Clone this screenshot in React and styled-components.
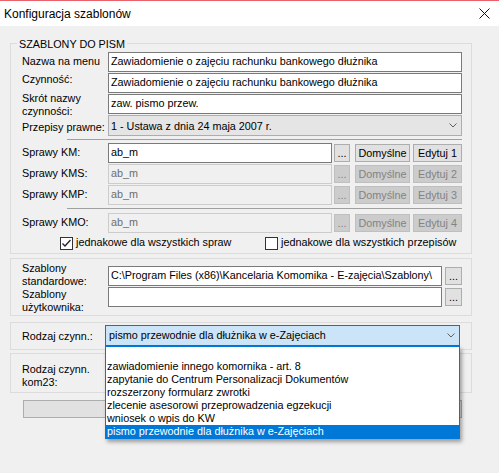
import React from 'react';
import styled, { createGlobalStyle } from 'styled-components';

const FONT = `"Liberation Sans", Arial, sans-serif`;

const GlobalStyle = createGlobalStyle`
  html, body { margin: 0; padding: 0; background: #f0f0f0; }
  body { font-family: ${FONT}; }
  * { box-sizing: border-box; }
`;

const Window = styled.div`
  position: relative;
  width: 499px;
  height: 473px;
  overflow: hidden;
  background: #f0f0f0;
  font-family: ${FONT};
  font-size: 10.8px;
  line-height: 13px;
  color: #000;
`;

const TitleBar = styled.div`
  height: 26px;
  border-top: 1px solid #e8606a;
  background: #fff;
  display: flex;
  align-items: center;
  justify-content: space-between;
  padding: 0 9px 0 4px;
`;

const Title = styled.div`
  font-size: 12px;
  line-height: 14px;
`;

const Client = styled.div`
  display: flex;
  flex-direction: column;
  align-items: flex-start;
  padding: 17px 0 0 10px;
`;

const GroupBox = styled.div`
  position: relative;
  width: 462px;
  height: ${p => p.$h}px;
  margin-top: ${p => p.$mt || 0}px;
  border: 1px solid #dcdcdc;
  padding: ${p => p.$pt || 0}px 9px 0 11px;
  display: flex;
  flex-direction: column;
`;

const Legend = styled.div`
  position: absolute;
  top: -6px;
  left: 6px;
  padding: 0 2px;
  background: #f0f0f0;
`;

const Row = styled.div`
  display: flex;
  align-items: flex-start;
  height: ${p => p.$h || 20}px;
  margin-top: ${p => p.$mt || 0}px;
  flex: none;
`;

const Label = styled.div`
  width: ${p => p.$w || 86}px;
  flex: none;
  margin-top: ${p => p.$pt || 0}px;
  white-space: nowrap;
`;

const TextBox = styled.div`
  width: ${p => p.$w || 354}px;
  height: 20px;
  flex: none;
  border: 1px solid ${p => (p.$disabled ? '#cccccc' : '#7a7a7a')};
  background: ${p => (p.$disabled ? '#f0f0f0' : '#fff')};
  color: ${p => (p.$disabled ? '#6d6d6d' : '#000')};
  padding: 2px 2px 0;
  white-space: nowrap;
  overflow: hidden;
`;

const Combo = styled.div`
  width: ${p => p.$w}px;
  height: 21px;
  flex: none;
  display: flex;
  align-items: flex-start;
  justify-content: space-between;
  border: 1px solid ${p => (p.$focused ? '#0078d7' : '#adadad')};
  background: ${p => (p.$focused ? '#cce4f7' : '#e5e5e5')};
  padding: ${p => (p.$focused ? '3px 0 0 3px' : '4px 0 0 2px')};
  white-space: nowrap;
`;

const ChevronBox = styled.div`
  width: 17px;
  height: 19px;
  margin-top: ${p => (p.$focused ? -3 : -4)}px;
  display: flex;
  align-items: center;
  justify-content: center;
  flex: none;
`;

const Btn = styled.div`
  width: ${p => p.$w}px;
  height: 18px;
  flex: none;
  margin-left: ${p => p.$ml || 0}px;
  margin-top: 1px;
  border: 1px solid ${p => (p.$disabled ? '#bfbfbf' : '#adadad')};
  background: ${p => (p.$disabled ? '#cccccc' : '#e1e1e1')};
  color: ${p => (p.$disabled ? '#838383' : '#000')};
  display: flex;
  align-items: center;
  justify-content: center;
  white-space: nowrap;
`;

const Separator = styled.div`
  width: 395px;
  height: 1px;
  flex: none;
  margin: ${p => p.$mt}px 0 ${p => p.$mb}px 45px;
  background: #a0a0a0;
`;

const CheckRow = styled.div`
  display: flex;
  height: 14px;
  flex: none;
  margin-top: 4px;
  padding-left: 38px;
`;

const CheckOption = styled.div`
  display: flex;
  align-items: flex-start;
  width: ${p => (p.$w ? `${p.$w}px` : 'auto')};
  flex: none;
`;

const CheckBox = styled.div`
  width: 13px;
  height: 13px;
  flex: none;
  border: 1px solid #333;
  background: #fff;
  display: flex;
  align-items: center;
  justify-content: center;
`;

const CheckText = styled.span`
  margin-left: 3px;
  margin-top: -1px;
  white-space: nowrap;
`;

const WideButton = styled.div`
  width: 439px;
  height: 18px;
  margin: 7px 0 0 13px;
  border: 1px solid #adadad;
  background: #e1e1e1;
`;

const DropList = styled.div`
  position: absolute;
  left: 105px;
  top: 346px;
  width: 355px;
  height: 93px;
  border: 1px solid #0078d7;
  background: #fff;
  box-shadow: 2px 3px 4px rgba(0, 0, 0, 0.35);
  display: flex;
  flex-direction: column;
`;

const ListItem = styled.div`
  height: 13px;
  flex: none;
  padding-left: 1px;
  white-space: nowrap;
  background: ${p => (p.$selected ? '#0078d7' : 'transparent')};
  color: ${p => (p.$selected ? '#fff' : '#000')};
`;

const Chevron = () => (
  <svg width="8" height="5" viewBox="0 0 8 5">
    <polyline points="0.5,0.5 4,4 7.5,0.5" fill="none" stroke="#606060" strokeWidth="1" />
  </svg>
);

const CloseIcon = () => (
  <svg width="11" height="11" viewBox="0 0 11 11">
    <path d="M0.5 0.5 L10.5 10.5 M10.5 0.5 L0.5 10.5" stroke="#111" strokeWidth="1" fill="none" />
  </svg>
);

const CheckMark = () => (
  <svg width="11" height="11" viewBox="0 0 11 11">
    <polyline points="1.5,5.5 4,8 9.5,2" fill="none" stroke="#222" strokeWidth="1.3" />
  </svg>
);

const CaseRow = ({ label, disabled, n }) => (
  <Row $mt={n === 1 || n === 4 ? 0 : 1}>
    <Label $pt={3}>{label}</Label>
    <TextBox $w={224} $disabled={disabled}>ab_m</TextBox>
    <Btn $w={16} $ml={2} $disabled={disabled}>...</Btn>
    <Btn $w={55} $ml={5} $disabled={disabled}>Domyślne</Btn>
    <Btn $w={49} $ml={3} $disabled={disabled}>Edytuj {n}</Btn>
  </Row>
);

const items = [
  '',
  'zawiadomienie innego komornika - art. 8',
  'zapytanie do Centrum Personalizacji Dokumentów',
  'rozszerzony formularz zwrotki',
  'zlecenie asesorowi przeprowadzenia egzekucji',
  'wniosek o wpis do KW',
  'pismo przewodnie dla dłużnika w e-Zajęciach',
];

export default function App() {
  return (
    <>
      <GlobalStyle />
      <Window>
        <TitleBar>
          <Title>Konfiguracja szablonów</Title>
          <CloseIcon />
        </TitleBar>
        <Client>
          <GroupBox $h={211} $pt={8}>
            <Legend>SZABLONY DO PISM</Legend>
            <Row>
              <Label $pt={3}>Nazwa na menu</Label>
              <TextBox>Zawiadomienie o zajęciu rachunku bankowego dłużnika</TextBox>
            </Row>
            <Row $mt={1}>
              <Label $pt={0}>Czynność:</Label>
              <TextBox>Zawiadomienie o zajęciu rachunku bankowego dłużnika</TextBox>
            </Row>
            <Row $mt={1}>
              <Label $pt={-2}>
                Skrót nazwy
                <br />
                czynności:
              </Label>
              <TextBox>zaw. pismo przew.</TextBox>
            </Row>
            <Row $mt={1} $h={21}>
              <Label $pt={6}>Przepisy prawne:</Label>
              <Combo $w={354}>
                <span>1 - Ustawa z dnia 24 maja 2007 r.</span>
                <ChevronBox>
                  <Chevron />
                </ChevronBox>
              </Combo>
            </Row>
            <Separator $mt={3} $mb={3} />
            <CaseRow label="Sprawy KM:" n={1} />
            <CaseRow label="Sprawy KMS:" n={2} disabled />
            <CaseRow label="Sprawy KMP:" n={3} disabled />
            <Separator $mt={3} $mb={4} />
            <CaseRow label="Sprawy KMO:" n={4} disabled />
            <CheckRow>
              <CheckOption $w={205}>
                <CheckBox>
                  <CheckMark />
                </CheckBox>
                <CheckText>jednakowe dla wszystkich spraw</CheckText>
              </CheckOption>
              <CheckOption>
                <CheckBox />
                <CheckText>jednakowe dla wszystkich przepisów</CheckText>
              </CheckOption>
            </CheckRow>
          </GroupBox>

          <GroupBox $h={58} $mt={4} $pt={7}>
            <Row>
              <Label $pt={-4}>
                Szablony
                <br />
                standardowe:
              </Label>
              <TextBox $w={334}>C:\Program Files (x86)\Kancelaria Komomika - E-zajęcia\Szablony\</TextBox>
              <Btn $w={17} $ml={3}>...</Btn>
            </Row>
            <Row $mt={1}>
              <Label $pt={1}>
                Szablony
                <br />
                użytkownika:
              </Label>
              <TextBox $w={334} />
              <Btn $w={17} $ml={3}>...</Btn>
            </Row>
          </GroupBox>

          <GroupBox $h={28} $mt={6} $pt={2}>
            <Row $h={21}>
              <Label $w={83} $pt={5}>Rodzaj czynn.:</Label>
              <Combo $w={355} $focused>
                <span>pismo przewodnie dla dłużnika w e-Zajęciach</span>
                <ChevronBox $focused>
                  <Chevron />
                </ChevronBox>
              </Combo>
            </Row>
          </GroupBox>

          <GroupBox $h={40} $mt={3} $pt={9}>
            <Label>
              Rodzaj czynn.
              <br />
              kom23:
            </Label>
          </GroupBox>

          <WideButton />
        </Client>

        <DropList>
          {items.map((t, i) => (
            <ListItem key={i} $selected={i === items.length - 1}>
              {t}
            </ListItem>
          ))}
        </DropList>
      </Window>
    </>
  );
}
